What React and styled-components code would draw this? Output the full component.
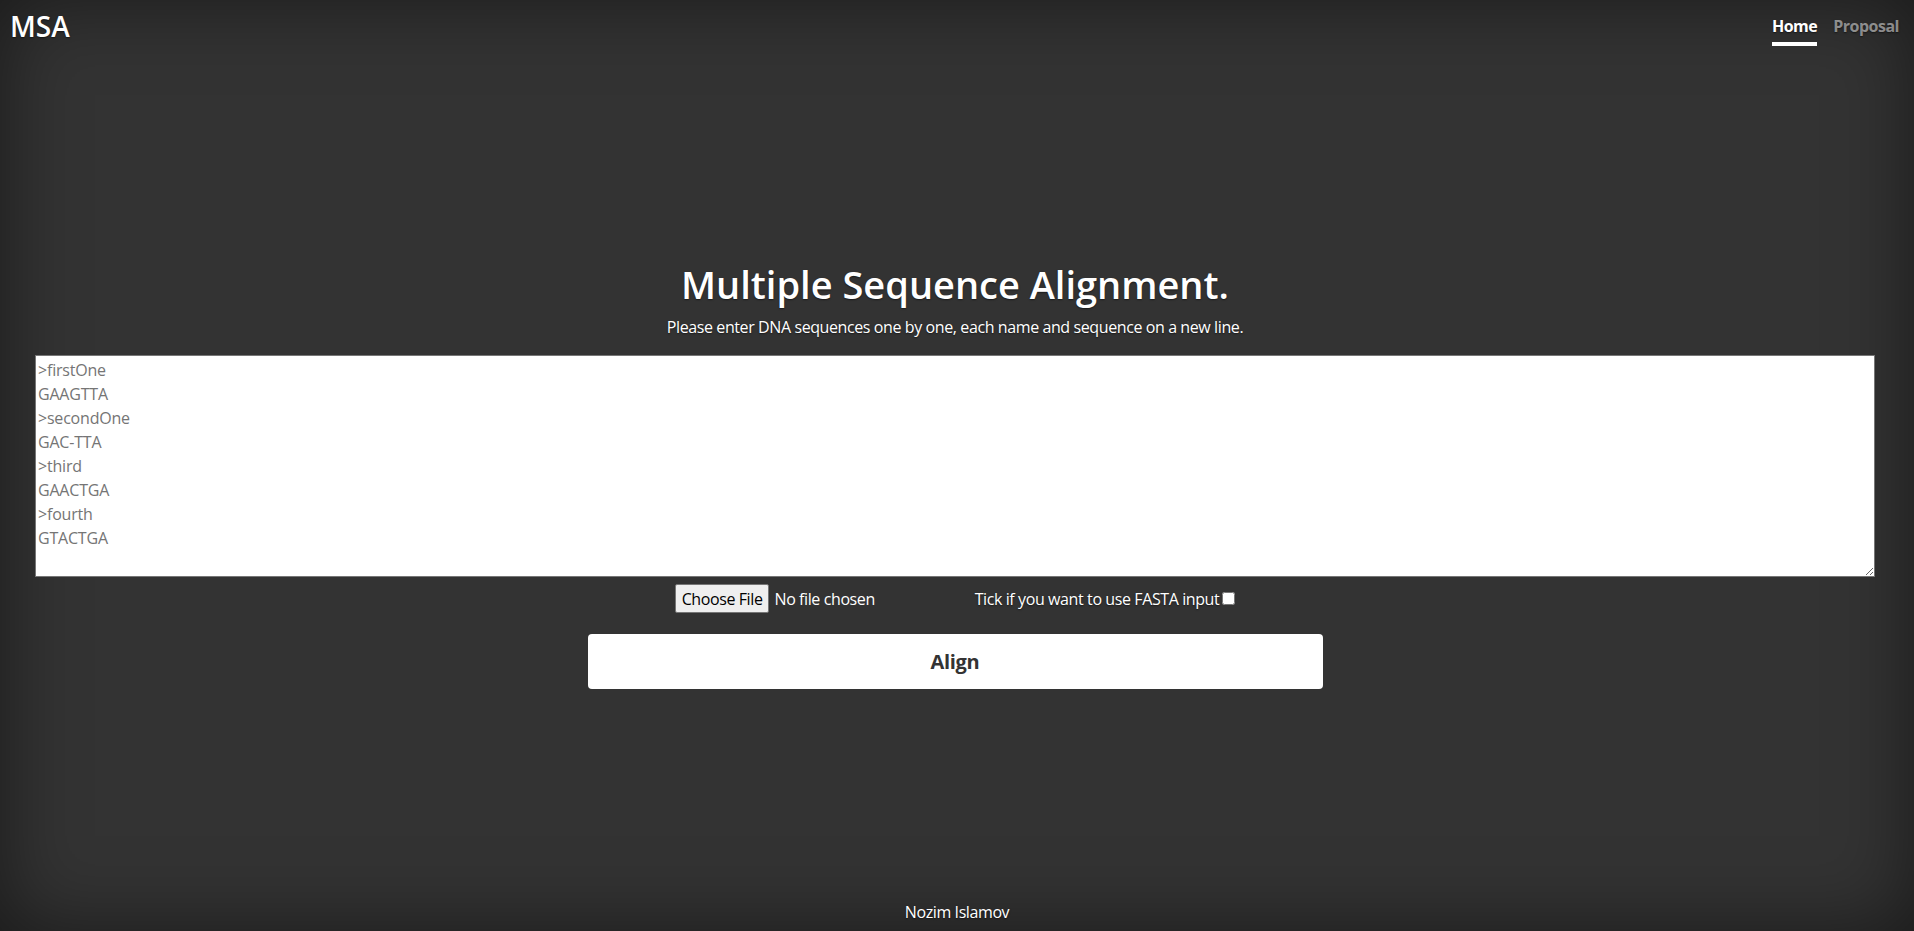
import React from 'react';
import styled, { createGlobalStyle } from 'styled-components';

const fontStack = '"Segoe UI", "Open Sans", "Noto Sans", Arial, sans-serif';

const GlobalStyle = createGlobalStyle`
  * {
    box-sizing: border-box;
  }
  html,
  body {
    margin: 0;
    padding: 0;
    height: 100%;
    background-color: #333;
  }
  body {
    font-family: ${fontStack};
    font-size: 16px;
    line-height: 1.5;
    letter-spacing: -0.4px;
    color: #fff;
  }
`;

const Page = styled.div`
  display: flex;
  flex-direction: column;
  min-height: 100vh;
  background-color: #333;
  box-shadow: inset 0 0 5rem rgba(0, 0, 0, 0.5);
  text-align: center;
  text-shadow: 0 0.05rem 0.1rem rgba(0, 0, 0, 0.5);
`;

const Masthead = styled.header`
  display: flex;
  justify-content: space-between;
  align-items: flex-start;
  padding: 10px 15px 0 10px;
  margin-bottom: auto;
`;

const Brand = styled.h3`
  margin: 0;
  font-size: 28px;
  font-weight: 600;
  line-height: 1.2;
  letter-spacing: 0;
`;

const Nav = styled.nav`
  display: flex;
  gap: 16px;
`;

const NavLink = styled.a`
  display: block;
  padding: 4px 0;
  font-weight: 700;
  font-size: 16px;
  line-height: 24px;
  letter-spacing: -0.5px;
  text-decoration: none;
  color: ${(p) => (p.$active ? '#fff' : 'rgba(255, 255, 255, 0.5)')};
  border-bottom: 4px solid ${(p) => (p.$active ? '#fff' : 'transparent')};
`;

const Main = styled.main`
  display: flex;
  flex-direction: column;
  align-items: center;
  padding: 0 39px 0 35px;
`;

const Title = styled.h1`
  margin: 0 0 5px;
  font-size: 38px;
  font-weight: 600;
  line-height: 52px;
  letter-spacing: 0;
`;

const Lead = styled.p`
  margin: 0 0 16px;
  font-size: 16px;
  line-height: 24px;
`;

const SequenceInput = styled.textarea`
  display: block;
  width: 100%;
  padding: 2px;
  font-family: ${fontStack};
  font-size: 16px;
  line-height: 24px;
  letter-spacing: -0.2px;
  color: #333;
  background: #fff;
  border: 1px solid #767676;
  text-shadow: none;

  &::placeholder {
    color: #757575;
  }
`;

const Controls = styled.div`
  display: flex;
  align-items: center;
  justify-content: center;
  gap: 40px;
  margin: 8px 0 21px;
  height: 28px;
`;

const FileInput = styled.input`
  width: 260px;
  font-family: ${fontStack};
  font-size: 16px;
  letter-spacing: -0.4px;
  color: #fff;

  &::file-selector-button {
    height: 29px;
    margin-right: 5px;
    padding: 0 6px;
    font: inherit;
    letter-spacing: -0.4px;
    color: #000;
    background: #efefef;
    border: 1px solid #767676;
    border-radius: 2px;
    text-shadow: none;
  }
`;

const TickLabel = styled.label`
  display: flex;
  align-items: center;
  gap: 3px;
  font-size: 16px;
`;

const Checkbox = styled.input`
  margin: 0;
  width: 13px;
  height: 13px;
`;

const AlignButton = styled.button`
  width: 735px;
  height: 55px;
  border: none;
  border-radius: 4px;
  background: #fff;
  color: #333;
  font-family: ${fontStack};
  font-size: 20px;
  font-weight: 700;
  letter-spacing: -0.3px;
  cursor: pointer;
`;

const Footer = styled.footer`
  margin-top: auto;
  padding-bottom: 7px;
  font-size: 16px;
  line-height: 24px;
`;

const placeholder = '>firstOne\nGAAGTTA\n>secondOne\nGAC-TTA\n>third\nGAACTGA\n>fourth\nGTACTGA';

export default function App() {
  return (
    <Page>
      <GlobalStyle />
      <Masthead>
        <Brand>MSA</Brand>
        <Nav>
          <NavLink href="#" $active>Home</NavLink>
          <NavLink href="#">Proposal</NavLink>
        </Nav>
      </Masthead>
      <Main>
        <Title>Multiple Sequence Alignment.</Title>
        <Lead>Please enter DNA sequences one by one, each name and sequence on a new line.</Lead>
        <SequenceInput rows={9} placeholder={placeholder} />
        <Controls>
          <FileInput type="file" />
          <TickLabel>
            Tick if you want to use FASTA input
            <Checkbox type="checkbox" />
          </TickLabel>
        </Controls>
        <AlignButton type="button">Align</AlignButton>
      </Main>
      <Footer>Nozim Islamov</Footer>
    </Page>
  );
}
